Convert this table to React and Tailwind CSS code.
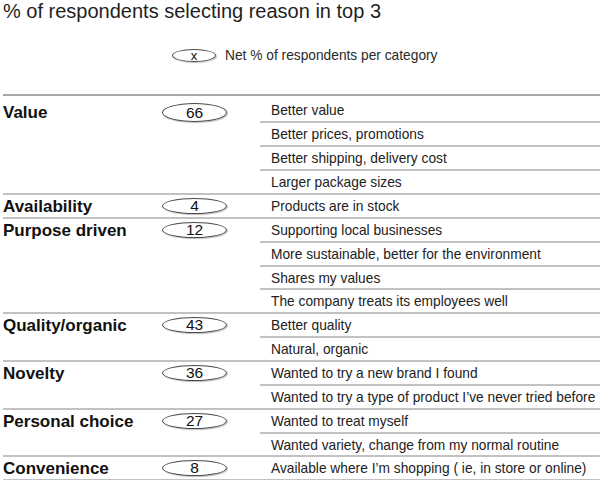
import React from 'react';

const sections = [
  { label: 'Value', value: 66, big: true, reasons: [['Better value', 24], ['Better prices, promotions', 24], ['Better shipping, delivery cost', 24], ['Larger package sizes', 24]] },
  { label: 'Availability', value: 4, reasons: [['Products are in stock', 24]] },
  { label: 'Purpose driven', value: 12, reasons: [['Supporting local businesses', 24], ['More sustainable, better for the environment', 24], ['Shares my values', 23], ['The company treats its employees well', 24]] },
  { label: 'Quality/organic', value: 43, reasons: [['Better quality', 24], ['Natural, organic', 24]] },
  { label: 'Novelty', value: 36, reasons: [['Wanted to try a new brand I found', 24], ['Wanted to try a type of product I\u2019ve never tried before', 24]] },
  { label: 'Personal choice', value: 27, reasons: [['Wanted to treat myself', 24], ['Wanted variety, change from my normal routine', 23]] },
  { label: 'Convenience', value: 8, reasons: [['Available where I\u2019m shopping ( ie, in store or online)', 24]] },
];

function Pill({ children, className }) {
  return (
    <div className={`flex items-center justify-center rounded-[50%] border border-[#4a4a4a] shadow-[1px_1px_1px_rgba(0,0,0,0.25)] text-[#111] ${className}`}>
      {children}
    </div>
  );
}

export default function App() {
  return (
    <div className="w-[600px] h-[480px] overflow-hidden bg-white text-[#1a1a1a]" style={{ fontFamily: '"Liberation Sans", Arial, sans-serif' }}>
      {/* Title */}
      <h1 className="pl-[3px] text-[20px] leading-[22px] font-normal text-[#1f1f1f]">
        % of respondents selecting reason in top 3
      </h1>

      {/* Legend */}
      <div className="mt-[27px] h-[13px] flex items-center pl-[172px] gap-[9px]">
        <Pill className="w-[44px] h-[13px] text-[13px] leading-none pb-[1px]">x</Pill>
        <span className="text-[13.75px] leading-[16px] text-[#2a2a2a]">Net % of respondents per category</span>
      </div>

      {/* Table */}
      <div className="ml-[3px] mt-[32px] h-[2px] bg-[#a8a8a8]" />
      <div className="ml-[3px] pt-[3px]">
        {sections.map((s) => (
          <div key={s.label} className="flex">
            <div className="w-[257px] flex items-start shrink-0 border-b-2 border-[#c2c2c2]">
              <div className={`w-[159px] text-[17px] font-bold leading-[20px] text-[#111] ${s.big ? 'mt-[4px]' : 'mt-[2px]'}`}>
                {s.label}
              </div>
              <Pill className={`w-[65px] text-[15.5px] leading-none ${s.big ? 'h-[19px] mt-[4px]' : 'h-[16px] mt-[3px]'}`}>
                {s.value}
              </Pill>
            </div>
            <div className="flex-1">
              {s.reasons.map(([r, h]) => (
                <div
                  key={r}
                  className={`${h === 23 ? 'h-[23px]' : 'h-[24px]'} pl-[11px] text-[13.75px] leading-[24px] text-[#222] whitespace-nowrap border-b-2 border-[#c2c2c2]`}
                >
                  {r}
                </div>
              ))}
            </div>
          </div>
        ))}
      </div>
    </div>
  );
}
